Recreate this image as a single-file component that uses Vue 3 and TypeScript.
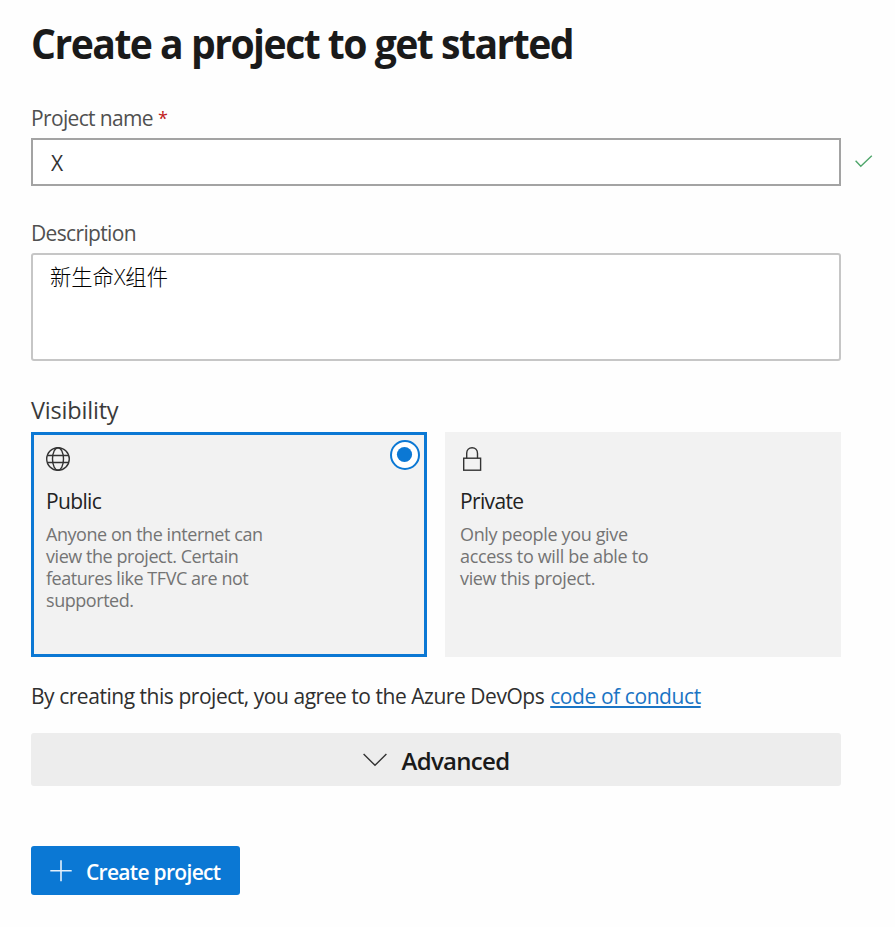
<script setup lang="ts">
import { ref } from 'vue'

type Visibility = 'public' | 'private'

interface VisibilityOption {
  id: Visibility
  title: string
  lines: string[]
}

const projectName = ref('X')
const description = ref('新生命X组件')
const selected = ref<Visibility>('public')

const options: VisibilityOption[] = [
  {
    id: 'public',
    title: 'Public',
    lines: ['Anyone on the internet can', 'view the project. Certain', 'features like TFVC are not', 'supported.'],
  },
  {
    id: 'private',
    title: 'Private',
    lines: ['Only people you give', 'access to will be able to', 'view this project.'],
  },
]
</script>

<template>
  <main class="page">
    <h1 class="heading"><span>Create a project to get started</span></h1>

    <label class="label name-label" for="project-name"><span>Project name</span><span class="required">*</span></label>
    <div class="name-row">
      <input id="project-name" v-model="projectName" class="field name-input" type="text" />
      <svg class="check" width="18" height="13" viewBox="0 0 18 13" fill="none" stroke="#4fa66b" stroke-width="1.4">
        <path d="M0.6 5.8 L5.8 11.2 L16.8 0.8" />
      </svg>
    </div>

    <label class="label desc-label" for="project-description"><span>Description</span></label>
    <textarea id="project-description" v-model="description" class="field desc-input"></textarea>

    <div class="visibility-label"><span>Visibility</span></div>
    <div class="cards">
      <section
        v-for="option in options"
        :key="option.id"
        class="card"
        :class="[option.id, { selected: selected === option.id }]"
        @click="selected = option.id"
      >
        <div class="card-top">
          <svg v-if="option.id === 'public'" class="card-icon" width="24" height="24" viewBox="0 0 24 24" fill="none" stroke="#333" stroke-width="1.4">
            <circle cx="12" cy="12" r="11.3" />
            <ellipse cx="12" cy="12" rx="5.5" ry="11.3" />
            <path d="M1.4 8.5 H22.6 M1.4 15.5 H22.6" />
          </svg>
          <svg v-else class="card-icon" width="24" height="24" viewBox="0 0 24 24" fill="none" stroke="#333" stroke-width="1.4">
            <rect x="3.7" y="11.2" width="16.9" height="12" />
            <path d="M6.7 11.2 V6.2 C6.7 2.9 9 0.7 12.1 0.7 C15.2 0.7 17.5 2.9 17.5 6.2 V11.2" />
          </svg>
          <svg v-if="selected === option.id" class="radio" width="30" height="30" viewBox="0 0 30 30">
            <circle cx="15" cy="15" r="14" fill="#fff" stroke="#0b78d4" stroke-width="2" />
            <circle cx="14.5" cy="14.5" r="7.6" fill="#0b78d4" />
          </svg>
        </div>
        <h2 class="card-title"><span>{{ option.title }}</span></h2>
        <p class="card-text">
          <span v-for="line in option.lines" :key="line" class="card-line">{{ line }}</span>
        </p>
      </section>
    </div>

    <p class="agreement"><span>By creating this project, you agree to the Azure DevOps</span><a class="link">code of conduct</a></p>

    <button class="advanced" type="button">
      <svg width="24" height="14" viewBox="0 0 24 14" fill="none" stroke="#333" stroke-width="1.4">
        <path d="M0.6 1 L12 12.3 L23.4 1" />
      </svg>
      <span>Advanced</span>
    </button>

    <button class="create" type="button">
      <svg width="22" height="22" viewBox="0 0 22 22" fill="none" stroke="#e4f0fb" stroke-width="1.6">
        <path d="M11 0.3 V21.3 M0.3 10.8 H21.7" />
      </svg>
      <span>Create project</span>
    </button>
  </main>
</template>

<style>
body {
  background: #fefefe;
}
</style>

<style scoped>
.page {
  box-sizing: border-box;
  width: 895px;
  height: 927px;
  padding: 23px 22px 0 31px;
  display: flex;
  flex-direction: column;
  align-items: flex-start;
  overflow: hidden;
  background: #fefefe;
  color: #2f2f2f;
  font-family: "Open Sans", "Noto Sans", "Noto Sans CJK SC", sans-serif;
  white-space: nowrap;
}

.heading {
  margin: 0;
  height: 40px;
  line-height: 40px;
  font-size: 41px;
  font-weight: 700;
  letter-spacing: -1.6px;
  color: #1a1a1a;
}

.heading span {
  display: inline-block;
  transform: scaleX(0.955);
  transform-origin: left center;
}

.label {
  display: flex;
  height: 30px;
  line-height: 30px;
  font-size: 21px;
  letter-spacing: -0.65px;
  color: #505050;
}

.name-label {
  margin-top: 40px;
  gap: 5px;
}

.required {
  font-size: 18px;
  color: #c02020;
}

.name-row {
  display: flex;
  align-items: center;
  gap: 14px;
  margin-top: 5px;
}

.field {
  box-sizing: border-box;
  display: block;
  width: 810px;
  margin: 0;
  outline: none;
  resize: none;
  background: #fff;
  font-family: inherit;
  font-size: 21px;
  color: #333;
}

.name-input {
  height: 48px;
  padding: 2px 18px 0;
  border: 2px solid #a3a3a3;
}

.check {
  margin-bottom: 2px;
}

.desc-label {
  margin-top: 32px;
}

.desc-input {
  height: 108px;
  margin-top: 5px;
  padding: 7px 17px;
  border: 2px solid #c6c6c6;
  border-radius: 3px;
  line-height: 30px;
  font-size: 21.3px;
  font-weight: 300;
  color: #000;
}

.visibility-label {
  margin-top: 33px;
  height: 32px;
  line-height: 32px;
  font-size: 23.5px;
  letter-spacing: -0.2px;
  color: #3a3a3a;
}

.cards {
  display: flex;
  gap: 18px;
  margin-top: 6px;
}

.card {
  box-sizing: border-box;
  width: 396px;
  height: 225px;
  padding: 5px 4px 0 12px;
  border: 3px solid #f2f2f2;
  background: #f2f2f2;
}

.card.selected {
  border-color: #0b78d4;
}

.card-top {
  display: flex;
  justify-content: space-between;
  height: 30px;
}

.card-icon {
  margin-top: 7px;
}

.card-title {
  margin: 16px 0 0;
  height: 30px;
  line-height: 30px;
  font-size: 21px;
  font-weight: 400;
  letter-spacing: -0.65px;
  color: #222;
}

.card-text {
  display: flex;
  flex-direction: column;
  align-items: flex-start;
  margin: 7px 0 0;
  line-height: 22px;
  font-size: 18px;
  letter-spacing: -0.45px;
  color: #747474;
}

.private .card-text {
  letter-spacing: -0.34px;
}

.agreement {
  display: flex;
  gap: 6px;
  margin: 24px 0 0;
  height: 30px;
  line-height: 30px;
  font-size: 21px;
  letter-spacing: -0.465px;
}

.link {
  letter-spacing: -0.42px;
  color: #1a74c4;
  text-decoration: underline;
  text-decoration-thickness: 2px;
  text-underline-offset: 2px;
}

button {
  display: flex;
  align-items: center;
  margin: 0;
  padding: 0;
  border: 0;
  border-radius: 3px;
  font-family: inherit;
  font-weight: 600;
  letter-spacing: -0.7px;
}

button span {
  padding-top: 2px;
}

.advanced {
  justify-content: center;
  gap: 15px;
  width: 810px;
  height: 53px;
  margin-top: 22px;
  background: #ededed;
  color: #1a1a1a;
  font-size: 24px;
}

.create {
  gap: 14px;
  width: 209px;
  height: 49px;
  margin-top: 60px;
  padding-left: 19px;
  background: #0b78d4;
  color: #fff;
  font-size: 21px;
}
</style>
